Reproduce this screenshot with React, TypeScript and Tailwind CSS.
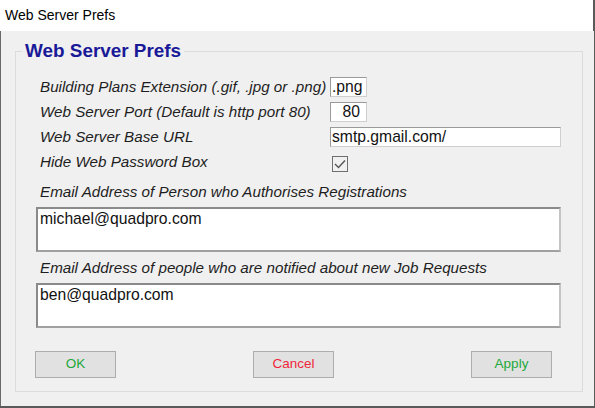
import React from "react";

const label = "italic text-[15.2px] leading-5 text-[#1e1e1e]";
const boxText = "text-[15.7px] leading-[18px] text-[#111]";

function Row({ text, children }: { text: string; children: React.ReactNode }) {
  return (
    <div className="flex h-5 items-center">
      <div className={`w-[294px] shrink-0 pl-[4px] whitespace-nowrap ${label}`}>{text}</div>
      {children}
    </div>
  );
}

function Field({ value, className, right }: { value: string; className: string; right?: boolean }) {
  return (
    <div
      className={`h-5 border border-t-[#9a9a9a] border-l-[#9a9a9a] border-b-[#cfcfcf] border-r-[#cfcfcf] bg-white px-[1px] ${boxText} ${right ? "text-right pr-[6px]" : ""} ${className}`}
    >
      {value}
    </div>
  );
}

function Area({ value }: { value: string }) {
  return (
    <div className={`h-[45px] border-2 border-t-[#8a8a8a] border-l-[#8a8a8a] border-b-[#a0a0a0] border-r-[#c4c4c4] bg-white px-[2px] pt-[1px] ${boxText}`}>
      {value}
    </div>
  );
}

function Btn({ text, color }: { text: string; color: string }) {
  return (
    <button className={`h-[27px] w-[81px] border border-[#adadad] bg-[#e1e1e1] text-[13.5px] ${color}`}>
      {text}
    </button>
  );
}

export default function App() {
  return (
    <div className="flex h-[408px] w-[595px] flex-col bg-[#5a5a5a] font-['Liberation_Sans',Arial,sans-serif]">
      <div className="flex h-[31px] w-[594px] shrink-0 items-center border-r border-[#5a5a5a] bg-white pl-[5px] text-[14px] text-black">
        Web Server Prefs
      </div>
      <div className="h-[375px] w-[594px] border-l border-[#6a6a6a] bg-[#f0f0f0] pt-[10px] pl-[14px]">
        <fieldset className="w-[568px] border border-[#dcdcdc] pl-[20px] pr-[21px] pb-[13px]">
          <legend className="-ml-[14px] px-[3px] text-[18.9px] font-bold leading-5 text-[#1a1a99]">Web Server Prefs</legend>
          <div className="mt-[16px] flex flex-col gap-[5px]">
            <Row text="Building Plans Extension (.gif, .jpg or .png)">
              <Field value=".png" className="w-[37px]" />
            </Row>
            <Row text="Web Server Port (Default is http port 80)">
              <Field value="80" className="w-[37px]" right />
            </Row>
            <Row text="Web Server Base URL">
              <Field value="smtp.gmail.com/" className="w-[231px]" />
            </Row>
            <div className="flex h-5 items-center">
              <div className={`w-[296px] shrink-0 pl-[4px] ${label}`}>Hide Web Password Box</div>
              <div className="mt-[4px] flex h-4 w-4 items-center justify-center border border-[#707070]">
                <svg width="12" height="10" viewBox="0 0 12 10" fill="none">
                  <path d="M1 5 L4.5 8.5 L11 1.5" stroke="#555" strokeWidth="1.4" />
                </svg>
              </div>
            </div>
          </div>
          <div className={`mt-[10px] pl-[4px] ${label}`}>Email Address of Person who Authorises Registrations</div>
          <div className="mt-[5px]">
            <Area value="michael@quadpro.com" />
          </div>
          <div className={`mt-[6px] pl-[4px] ${label}`}>Email Address of people who are notified about new Job Requests</div>
          <div className="mt-[5px]">
            <Area value="ben@quadpro.com" />
          </div>
          <div className="mt-[23px] -ml-[1px] mr-[9px] flex justify-between">
            <Btn text="OK" color="text-[#22a83a]" />
            <Btn text="Cancel" color="text-[#f0263c]" />
            <Btn text="Apply" color="text-[#22a83a]" />
          </div>
        </fieldset>
      </div>
    </div>
  );
}
